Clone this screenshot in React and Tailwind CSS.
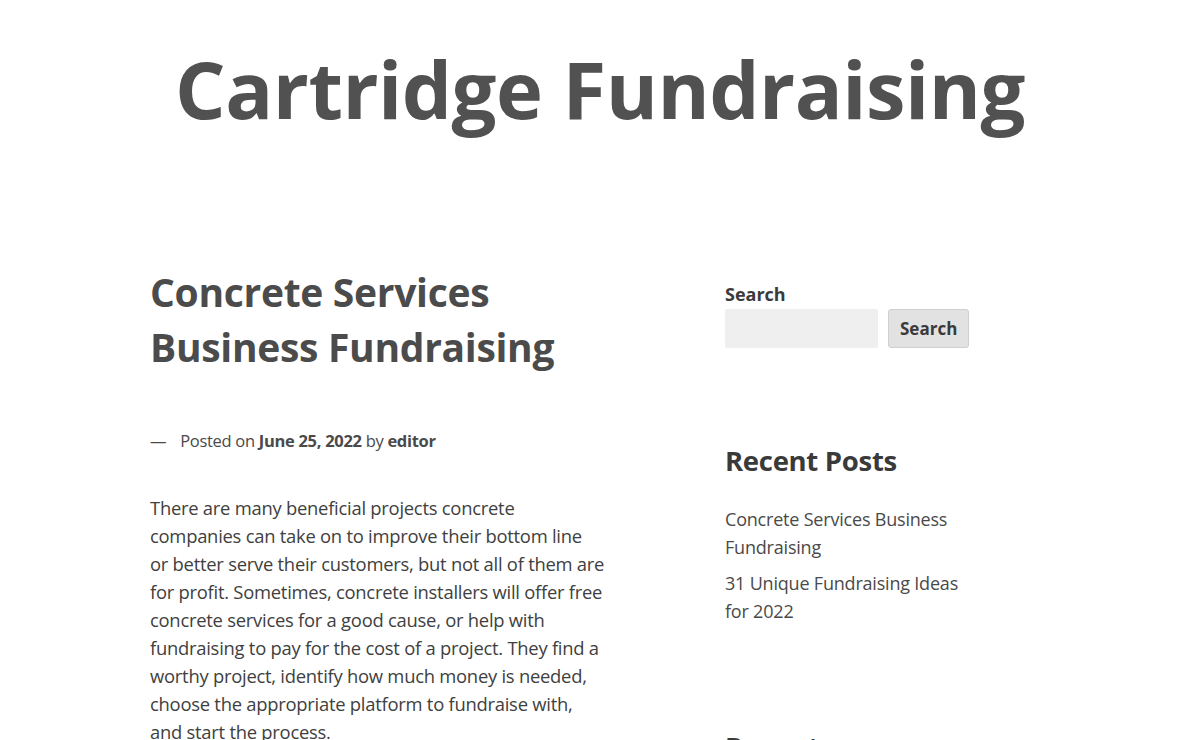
export default function App() {
  return (
    <div className="min-h-[740px] bg-white text-[#404040] font-['Open_Sans',sans-serif]">
      <header className="pt-[41px] pb-[128px] text-center">
        <h1 className="text-[79.5px] leading-[1.2] font-bold text-[#515151] tracking-[-0.5px]">Cartridge Fundraising</h1>
      </header>
      <div className="w-[900px] mx-auto flex">
        <main className="w-[455px]">
          <h2 className="text-[39px] leading-[55px] font-bold text-[#4b4b4b] tracking-[-0.3px]">Concrete Services Business Fundraising</h2>
          <div className="mt-[55px] text-[16.5px] text-[#4a4a4a] tracking-[-0.3px] flex items-center">
            <span className="mr-[14px]">—</span>
            <span>Posted on <b className="font-bold">June 25, 2022</b> by <b className="font-bold">editor</b></span>
          </div>
          <p className="mt-[40px] text-[18.4px] leading-[28px] text-[#404040] tracking-[-0.25px] whitespace-nowrap">
            There are many beneficial projects concrete<br />
            companies can take on to improve their bottom line<br />
            or better serve their customers, but not all of them are<br />
            for profit. Sometimes, concrete installers will offer free<br />
            concrete services for a good cause, or help with<br />
            fundraising to pay for the cost of a project. They find a<br />
            worthy project, identify how much money is needed,<br />
            choose the appropriate platform to fundraise with,<br />
            and start the process.
          </p>
        </main>
        <aside className="ml-[120px] w-[250px]">
          <div className="pt-[18px]">
            <label className="block text-[18px] font-bold text-[#3a3a3a] leading-[24px]">Search</label>
            <div className="flex mt-[3px] gap-[10px]">
              <input className="w-[153px] h-[39px] bg-[#efefef] rounded-[2px] outline-none" />
              <button className="h-[39px] px-[11px] bg-[#e2e2e2] border border-[#cfcfcf] rounded-[3px] text-[17px] font-bold text-[#3a3a3a]">Search</button>
            </div>
          </div>
          <h2 className="mt-[93px] text-[27.5px] font-bold text-[#3a3a3a] leading-[40px] tracking-[-0.3px]">Recent Posts</h2>
          <ul className="mt-[24px] text-[18px] leading-[28px] text-[#4a4a4a] tracking-[-0.2px]">
            <li className="mb-[8px]">Concrete Services Business Fundraising</li>
            <li>31 Unique Fundraising Ideas for 2022</li>
          </ul>
          <h2 className="mt-[102px] text-[27.5px] font-bold text-[#3a3a3a] leading-[40px]">Recent Comments</h2>
        </aside>
      </div>
    </div>
  );
}
